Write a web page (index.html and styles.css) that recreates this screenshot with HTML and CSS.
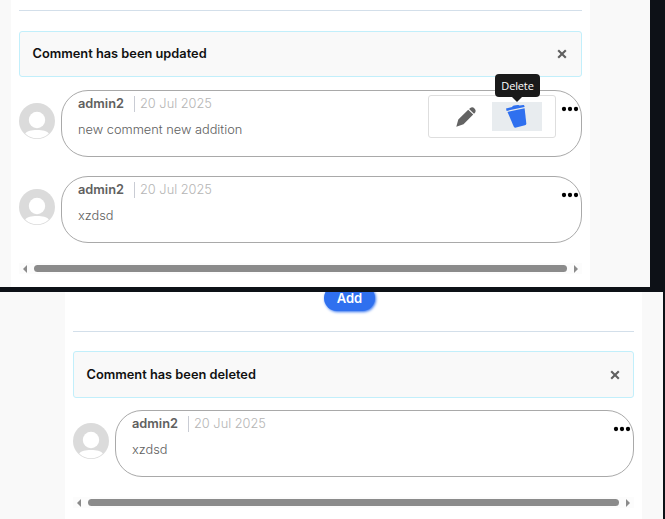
FILE: index.html
```html
<!DOCTYPE html>
<html lang="en">
<head>
<meta charset="utf-8">
<title>Comments</title>
<link rel="stylesheet" href="styles.css">
</head>
<body>
<svg class="defs" aria-hidden="true">
  <symbol id="avatar" viewBox="0 0 36 36">
    <circle cx="18" cy="18" r="18" fill="#dbdbdb"/>
    <circle cx="18" cy="17" r="8.2" fill="#fff"/>
    <path d="M6.200 30.500C8.500 27.800 12 27 18 27s9.500.8 11.800 3.500A17.300 17.300 0 0 1 18 35.300 17.300 17.300 0 0 1 6.200 30.500Z" fill="#fff"/>
  </symbol>
  <symbol id="close" viewBox="0 0 10 10">
    <path d="M1.200 1.200 8.800 8.800M8.800 1.200 1.200 8.800" stroke="#606060" stroke-width="2.100"/>
  </symbol>
  <symbol id="dots" viewBox="0 0 18 6">
    <circle cx="3" cy="3" r="2.150"/><circle cx="9" cy="3" r="2.150"/><circle cx="15" cy="3" r="2.150"/>
  </symbol>
</svg>

<section class="shot shot-top">
  <main class="column">
    <hr class="rule">
    <div class="alert"><strong>Comment has been updated</strong><svg class="close"><use href="#close"/></svg></div>
    <article class="comment">
      <svg class="avatar"><use href="#avatar"/></svg>
      <div class="bubble">
        <div class="meta"><b>admin2</b><span class="date">20 Jul 2025</span></div>
        <p class="text">new comment new addition</p>
        <svg class="dots"><use href="#dots"/></svg>
        <div class="actions">
          <svg class="pencil" viewBox="0 0 20 20"><path d="M.300 19.700 2.300 12.500 12.200 2.700 17.200 7.600 7.500 17.300ZM13.100 1.900 14.200.900Q16.500-.700 18.500 1.400T19 5.700L18 6.800Z" fill="#636363"/></svg>
          <div class="delete">
            <svg class="trash" viewBox="0 0 21 23"><g fill="#2f70ef"><path d="M0 3.600 6 2.100Q6.600.700 8 .500L11.500 0Q12.700-.200 13.600.600L17.300.100Q18.200 0 18.400.900L18.600 2 .600 5.900Z"/><path d="M1.500 6.900 18.600 3.300 20.300 18.200Q20.400 19.800 18.900 20.300L10.200 22.600Q8.500 23 7.700 21.500Z"/></g></svg>
            <span class="tooltip">Delete</span>
          </div>
        </div>
      </div>
    </article>
    <article class="comment">
      <svg class="avatar"><use href="#avatar"/></svg>
      <div class="bubble">
        <div class="meta"><b>admin2</b><span class="date">20 Jul 2025</span></div>
        <p class="text">xzdsd</p>
        <svg class="dots"><use href="#dots"/></svg>
      </div>
    </article>
    <div class="scrollbar"><i class="arrow left"></i><i class="thumb"></i><i class="arrow right"></i></div>
  </main>
</section>

<section class="shot shot-bottom">
  <main class="column">
    <button class="add">Add</button>
    <hr class="rule">
    <div class="alert"><strong>Comment has been deleted</strong><svg class="close"><use href="#close"/></svg></div>
    <article class="comment">
      <svg class="avatar"><use href="#avatar"/></svg>
      <div class="bubble">
        <div class="meta"><b>admin2</b><span class="date">20 Jul 2025</span></div>
        <p class="text">xzdsd</p>
        <svg class="dots"><use href="#dots"/></svg>
      </div>
    </article>
    <div class="scrollbar"><i class="arrow left"></i><i class="thumb"></i><i class="arrow right"></i></div>
  </main>
</section>
</body>
</html>
```
FILE: styles.css
```css
* { box-sizing: border-box; }
body {
  margin: 0;
  width: 665px;
  height: 519px;
  overflow: hidden;
  background: #0d1117;
  font: 12.8px/20px Inter, "Liberation Sans", sans-serif;
}
.defs { display: none; }
svg { display: block; }

.shot { overflow: hidden; background: #f9f9f9; }
.shot-top { width: 650px; height: 287px; padding-left: 11px; }
.shot-bottom { width: 663px; height: 227px; margin-top: 5px; padding-left: 65px; }
.column { display: flow-root; height: 100%; background: #fff; padding: 0 8px; }
.shot-top .column { width: 579px; }
.shot-bottom .column { width: 577px; }

.rule { height: 1px; margin: 10px 0 20px; border: 0; background: #d3dfea; }
.shot-bottom .rule { margin: 20px 0 19px; }

.alert {
  display: flex;
  align-items: center;
  justify-content: space-between;
  height: 46px;
  padding: 0 14px 0 12.5px;
  border: 1px solid #c2effb;
  border-radius: 3px;
  background: #f9f9f9;
  color: #111;
}
.shot-bottom .alert { height: 47px; padding-right: 13.5px; }
.alert strong { font-weight: 600; }
.close { width: 10px; height: 10px; }

.comment {
  display: flex;
  gap: 7px;
  margin-top: 13px;
}
.comment + .comment { margin-top: 19px; }
.shot-bottom .comment { margin-top: 12px; }
.avatar { flex: none; width: 36px; height: 36px; margin-top: 12.500px; }
.bubble {
  position: relative;
  flex: 1;
  height: 67px;
  margin-left: -1px;
  padding: 4px 16px;
  border: 1px solid #a9a9a9;
  border-radius: 27px;
}
.meta { display: flex; align-items: center; height: 18px; color: #606060; }
.meta b { font-weight: 600; }
.date {
  margin-left: 10px;
  padding-left: 5px;
  border-left: 1px solid #c9ccd4;
  line-height: 16px;
  font-weight: 300;
  color: #b5b5b5;
}
.text { margin: 7px 0 0; font-weight: 300; color: #606060; }
.dots { position: absolute; top: 15px; right: 2px; width: 18px; height: 6px; }

.actions {
  position: absolute;
  top: 4px;
  right: 25px;
  display: flex;
  align-items: center;
  justify-content: space-between;
  width: 128px;
  height: 43px;
  padding: 0 13px 0 27px;
  border: 1px solid #dedede;
  border-radius: 3px;
  background: #fff;
}
.pencil { width: 20px; height: 20px; }
.delete {
  position: relative;
  width: 50px;
  height: 29px;
  padding: 3px 0 0 14px;
  background: #e8ecef;
}
.trash { width: 21px; height: 23px; }
.tooltip {
  position: absolute;
  left: 3px;
  bottom: 34px;
  width: 45px;
  height: 23px;
  border-radius: 4px;
  background: #1a1a1a;
  color: #fff;
  font: 11px/24px "Open Sans", "Noto Sans", sans-serif;
  letter-spacing: -0.150px;
  text-align: center;
}
.tooltip::after {
  content: "";
  position: absolute;
  top: 100%;
  left: 17px;
  border: 5px solid transparent;
  border-top-color: #1a1a1a;
  border-bottom: 0;
}

.scrollbar {
  display: flex;
  align-items: center;
  gap: 7px;
  height: 11px;
  margin-top: 20px;
  padding: 0 4px;
  background: #fcfcfc;
}
.thumb { flex: 1; height: 7.500px; border-radius: 4px; background: #8b8b8b; }
.arrow { border: 4px solid transparent; }
.left { border-right: 4px solid #8b8b8b; border-left: 0; }
.right { border-left: 4px solid #8b8b8b; border-right: 0; }

.add {
  display: block;
  width: 51px;
  height: 26px;
  margin: -7px auto 0;
  transform: translateX(-4px);
  padding: 0;
  border: 0;
  border-radius: 13px;
  background: #2f70ef;
  box-shadow: 1px 1px 3px #2f70ef;
  color: #fff;
  font: 600 13px/27px Inter, sans-serif;
}
```
